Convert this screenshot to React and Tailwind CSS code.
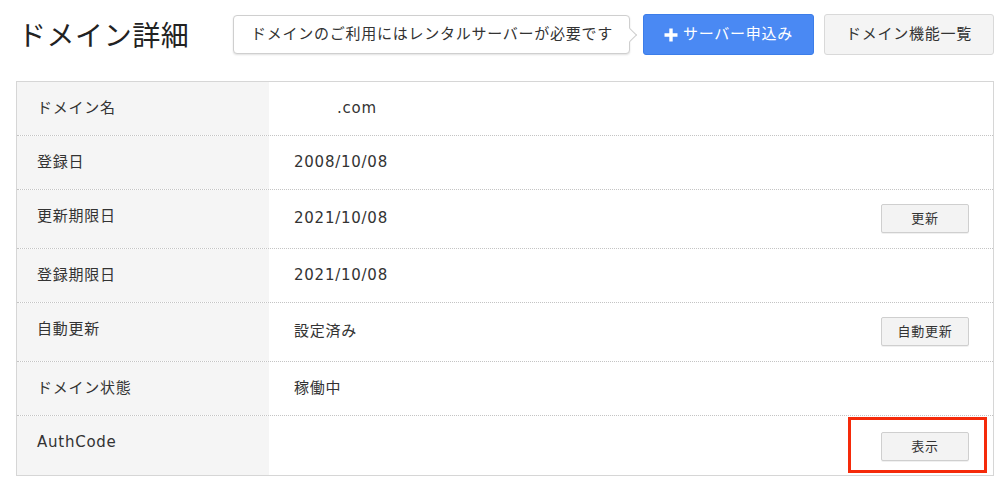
const font = {
  fontFamily: '"DejaVu Sans", "Noto Sans CJK JP", sans-serif',
};

const rows = [
  { label: "ドメイン名", value: "domain" },
  { label: "登録日", value: "2008/10/08" },
  { label: "更新期限日", value: "2021/10/08", button: "更新" },
  { label: "登録期限日", value: "2021/10/08" },
  { label: "自動更新", value: "設定済み", button: "自動更新" },
  { label: "ドメイン状態", value: "稼働中" },
  { label: "AuthCode", value: "", button: "表示", marked: true },
];

const SmallButton = ({ children }) => (
  <button
    type="button"
    className="h-[29px] w-[88px] rounded-[2px] border border-[#cfcfcf] bg-[#f3f3f3] text-[13px] text-[#333] shadow-[0_1px_0_rgba(0,0,0,0.06)]"
  >
    {children}
  </button>
);

export default function App() {
  return (
    <div
      className="min-h-screen bg-white pl-4 pr-[6px] pt-[14px] text-[15px] tracking-[0.05em] text-[#333]"
      style={font}
    >
      <header className="flex h-[41px] items-center justify-between">
        <h1 className="mt-[4px] pl-[2px] text-[28px] font-normal leading-[41px] tracking-[0.02em] text-[#222]">
          ドメイン詳細
        </h1>

        <div className="flex items-center">
          <div className="relative mr-[13px] flex h-[39px] w-[397px] items-center rounded-[4px] border border-[#cfcfcf] bg-white pl-[17px] shadow-[0_1px_2px_rgba(0,0,0,0.12)]">
            <span className="text-[15px] text-[#333]">ドメインのご利用にはレンタルサーバーが必要です</span>
            <span className="absolute right-[-6px] top-1/2 h-[10px] w-[10px] -translate-y-1/2 rotate-45 border-r border-t border-[#cfcfcf] bg-white" />
          </div>

          <button
            type="button"
            className="flex h-[41px] w-[171px] items-center justify-center gap-[5px] rounded-[3px] border border-[#3c7de9] bg-[#4a89f3] text-[15px] text-white"
          >
            <svg width="14" height="14" viewBox="0 0 14 14">
              <path d="M7 0.5v13M0.5 7h13" stroke="white" strokeWidth="3.4" />
            </svg>
            サーバー申込み
          </button>

          <button
            type="button"
            className="ml-[10px] flex h-[41px] w-[170px] items-center justify-center rounded-[3px] border border-[#d9d9d9] bg-[#f4f4f4] text-[15px] text-[#333]"
          >
            ドメイン機能一覧
          </button>
        </div>
      </header>

      <div className="mt-[26px] border border-[#d6d6d6]">
        {rows.map((row, i) => (
          <div
            key={row.label}
            className={`flex ${i > 0 ? "border-t border-dotted border-[#c4c4c4]" : ""}`}
          >
            <div className="w-[252px] shrink-0 bg-[#f5f5f5] px-5 pb-4 pt-4 leading-[21px]">
              {row.label}
            </div>
            <div
              className={`flex flex-1 items-center justify-between pl-[25px] pr-6 leading-[21px] ${
                row.button ? (row.marked ? "pb-[14px] pt-4" : "pb-[15px] pt-[14px]") : "py-4"
              }`}
            >
              <span className={row.marked ? "self-start" : ""}>
                {row.value === "domain" ? (
                  <>
                    <span className="inline-block w-[43px]" />
                    .com
                  </>
                ) : (
                  row.value
                )}
              </span>
              {row.button && (
                <div className="relative">
                  <SmallButton>{row.button}</SmallButton>
                  {row.marked && (
                    <span className="absolute -bottom-[12px] -left-[33px] -right-[18px] -top-[15px] border-[3px] border-[#f52a0a]" />
                  )}
                </div>
              )}
            </div>
          </div>
        ))}
      </div>
    </div>
  );
}
